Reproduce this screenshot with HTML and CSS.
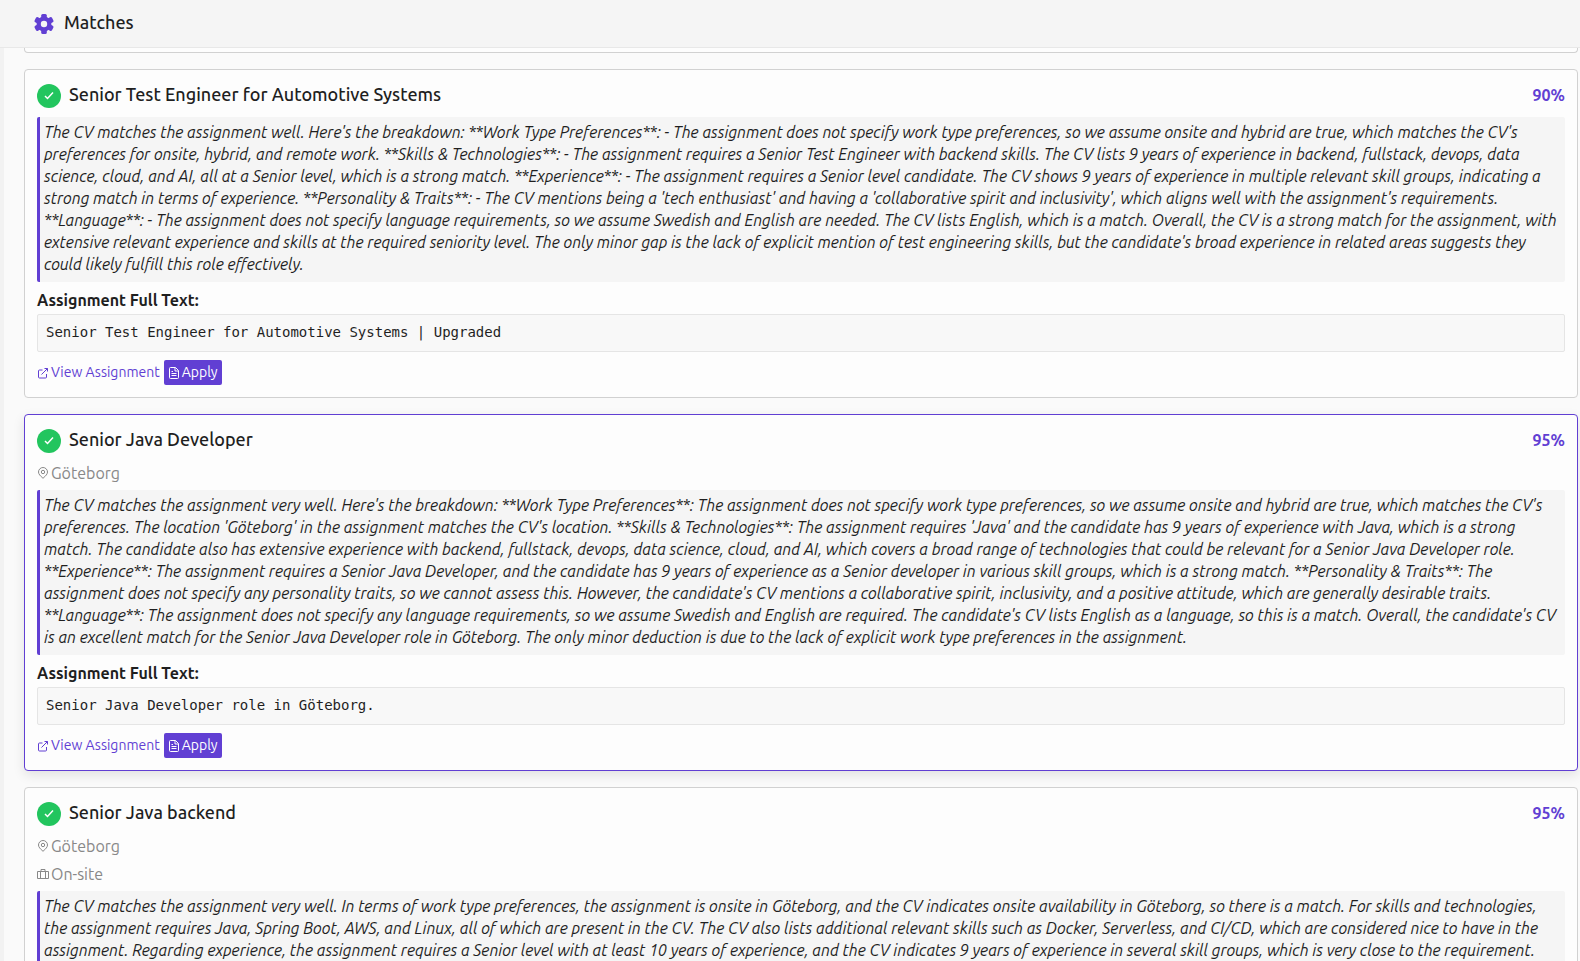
FILE: index.html
```html
<!DOCTYPE html>
<html lang="en">
<head>
  <meta charset="UTF-8">
  <meta name="viewport" content="width=device-width, initial-scale=1.0">
  <title>Matches</title>
  <link rel="stylesheet" href="styles.css">
</head>
<body>
  <!-- icon sprite -->
  <svg class="sprite" aria-hidden="true">
    <symbol id="icon-gear" viewBox="0 0 24 24">
      <circle cx="12" cy="12" r="5.3" fill="none" stroke="currentColor" stroke-width="4.2"/>
      <g fill="currentColor">
        <rect x="9.2" y="2" width="5.6" height="5" rx="1.5"/>
        <rect x="9.2" y="2" width="5.6" height="5" rx="1.5" transform="rotate(60 12 12)"/>
        <rect x="9.2" y="2" width="5.6" height="5" rx="1.5" transform="rotate(120 12 12)"/>
        <rect x="9.2" y="2" width="5.6" height="5" rx="1.5" transform="rotate(180 12 12)"/>
        <rect x="9.2" y="2" width="5.6" height="5" rx="1.5" transform="rotate(240 12 12)"/>
        <rect x="9.2" y="2" width="5.6" height="5" rx="1.5" transform="rotate(300 12 12)"/>
      </g>
    </symbol>
    <symbol id="icon-check" viewBox="0 0 24 24">
      <path fill="none" stroke="currentColor" stroke-width="3" d="M4 12l5 5L20 5"/>
    </symbol>
    <symbol id="icon-external" viewBox="0 0 12 12">
      <path fill="none" stroke="currentColor" stroke-linejoin="round" d="M5.5 3H2.5a1 1 0 0 0-1 1v6a1 1 0 0 0 1 1h6a1 1 0 0 0 1-1V7M7.5 1.500h3v3M10.500 1.500l-6 6"/>
    </symbol>
    <symbol id="icon-file" viewBox="0 0 12 12">
      <path fill="none" stroke="currentColor" stroke-linejoin="round" d="M2.500.5h5l3 3v7a1 1 0 0 1-1 1h-7a1 1 0 0 1-1-1v-9a1 1 0 0 1 1-1zM7 .5v3.500h3.500M3.500 4.500h1.500M3.500 6.500h5M3.500 8.500h5"/>
    </symbol>
    <symbol id="icon-pin" viewBox="0 0 12 12">
      <path fill="none" stroke="currentColor" d="M6 11.300C3.200 8.800 1.500 7 1.500 5a4.500 4.500 0 0 1 9 0c0 2-1.700 3.800-4.500 6.300z"/>
      <circle cx="6" cy="5" r="1.700" fill="none" stroke="currentColor"/>
    </symbol>
    <symbol id="icon-case" viewBox="0 0 12 12">
      <path fill="none" stroke="currentColor" stroke-linejoin="round" d="M.5 3.500h11v7H.5zM4 3.500v-2h4v2M3.500 3.500v7M8.500 3.500v7"/>
    </symbol>
  </svg>

  <header class="topbar">
    <svg class="topbar-icon"><use href="#icon-gear"/></svg>
    <h1>Matches</h1>
  </header>

  <main class="matches">
    <div class="card card-tail"></div>

    <article class="card">
      <div class="card-header">
        <span class="status"><svg><use href="#icon-check"/></svg></span>
        <h2>Senior Test Engineer for Automotive Systems</h2>
        <span class="score">90%</span>
      </div>
      <blockquote class="reason">The CV matches the assignment well. Here's the breakdown: **Work Type Preferences**: - The assignment does not specify work type preferences, so we assume onsite and hybrid are true, which matches the CV's
        preferences for onsite, hybrid, and remote work. **Skills &amp; Technologies**: - The assignment requires a Senior Test Engineer with backend skills. The CV lists 9 years of experience in backend, fullstack, devops, data
        science, cloud, and AI, all at a Senior level, which is a strong match. **Experience**: - The assignment requires a Senior level candidate. The CV shows 9 years of experience in multiple relevant skill groups, indicating a
        strong match in terms of experience. **Personality &amp; Traits**: - The CV mentions being a 'tech enthusiast' and having a 'collaborative spirit and inclusivity', which aligns well with the assignment's requirements.
        **Language**: - The assignment does not specify language requirements, so we assume Swedish and English are needed. The CV lists English, which is a match. Overall, the CV is a strong match for the assignment, with
        extensive relevant experience and skills at the required seniority level. The only minor gap is the lack of explicit mention of test engineering skills, but the candidate's broad experience in related areas suggests they
        could likely fulfill this role effectively.</blockquote>
      <h3>Assignment Full Text:</h3>
      <pre>Senior Test Engineer for Automotive Systems | Upgraded</pre>
      <div class="actions">
        <a href="#"><svg class="icon"><use href="#icon-external"/></svg>View Assignment</a>
        <button type="button"><svg class="icon"><use href="#icon-file"/></svg>Apply</button>
      </div>
    </article>

    <article class="card card-active">
      <div class="card-header">
        <span class="status"><svg><use href="#icon-check"/></svg></span>
        <h2>Senior Java Developer</h2>
        <span class="score">95%</span>
      </div>
      <div class="meta"><svg class="icon"><use href="#icon-pin"/></svg>Göteborg</div>
      <blockquote class="reason">The CV matches the assignment very well. Here's the breakdown: **Work Type Preferences**: The assignment does not specify work type preferences, so we assume onsite and hybrid are true, which matches the CV's
        preferences. The location 'Göteborg' in the assignment matches the CV's location. **Skills &amp; Technologies**: The assignment requires 'Java' and the candidate has 9 years of experience with Java, which is a strong
        match. The candidate also has extensive experience with backend, fullstack, devops, data science, cloud, and AI, which covers a broad range of technologies that could be relevant for a Senior Java Developer role.
        **Experience**: The assignment requires a Senior Java Developer, and the candidate has 9 years of experience as a Senior developer in various skill groups, which is a strong match. **Personality &amp; Traits**: The
        assignment does not specify any personality traits, so we cannot assess this. However, the candidate's CV mentions a collaborative spirit, inclusivity, and a positive attitude, which are generally desirable traits.
        **Language**: The assignment does not specify any language requirements, so we assume Swedish and English are required. The candidate's CV lists English as a language, so this is a match. Overall, the candidate's CV
        is an excellent match for the Senior Java Developer role in Göteborg. The only minor deduction is due to the lack of explicit work type preferences in the assignment.</blockquote>
      <h3>Assignment Full Text:</h3>
      <pre>Senior Java Developer role in Göteborg.</pre>
      <div class="actions">
        <a href="#"><svg class="icon"><use href="#icon-external"/></svg>View Assignment</a>
        <button type="button"><svg class="icon"><use href="#icon-file"/></svg>Apply</button>
      </div>
    </article>

    <article class="card">
      <div class="card-header">
        <span class="status"><svg><use href="#icon-check"/></svg></span>
        <h2>Senior Java backend</h2>
        <span class="score">95%</span>
      </div>
      <div class="meta"><svg class="icon"><use href="#icon-pin"/></svg>Göteborg</div>
      <div class="meta"><svg class="icon"><use href="#icon-case"/></svg>On-site</div>
      <blockquote class="reason">The CV matches the assignment very well. In terms of work type preferences, the assignment is onsite in Göteborg, and the CV indicates onsite availability in Göteborg, so there is a match. For skills and technologies,
        the assignment requires Java, Spring Boot, AWS, and Linux, all of which are present in the CV. The CV also lists additional relevant skills such as Docker, Serverless, and CI/CD, which are considered nice to have in the
        assignment. Regarding experience, the assignment requires a Senior level with at least 10 years of experience, and the CV indicates 9 years of experience in several skill groups, which is very close to the requirement.</blockquote>
    </article>
  </main>
</body>
</html>
```
FILE: styles.css
```css
body {
  margin: 0;
  height: 100vh;
  display: flex;
  flex-direction: column;
  overflow: hidden;
  font-family: Ubuntu, "Open Sans", "Noto Sans", sans-serif;
  font-size: 16px;
  line-height: 22px;
  color: #1f1f1f;
  background-color: #fafafa;
}
h1, h2, h3, pre, blockquote {
  margin: 0;
}
.sprite {
  position: absolute;
  width: 0;
  height: 0;
}

/* Top bar */
.topbar {
  flex: none;
  display: flex;
  align-items: center;
  gap: 8px;
  height: 47px;
  padding: 0 32px;
  background-color: #f5f5f5;
  border-bottom: 1px solid #e8e8e8;
}
.topbar h1 {
  padding-bottom: 4px;
  font-size: 18px;
  font-weight: 500;
}
.topbar-icon {
  width: 24px;
  height: 24px;
  color: #613fd3;
}

/* Card list */
.matches {
  flex: 1;
  min-height: 0;
  overflow: hidden;
  display: flex;
  flex-direction: column;
  gap: 16px;
  padding: 0 2px 0 20px;
  border-left: 4px solid #f2f2f2;
}
.card {
  flex: none;
  padding: 12px;
  background-color: #fdfdfd;
  border: 1px solid #d1d1d1;
  border-radius: 4px;
}
.card-active {
  border-color: #613fd3;
  box-shadow: 0 4px 12px rgba(0, 0, 0, 0.1);
}
/* bottom edge of the card scrolled under the top bar */
.card-tail {
  padding: 2px;
  border-top: none;
  border-radius: 0 0 4px 4px;
}

.card-header {
  display: flex;
  align-items: center;
  gap: 8px;
  height: 28px;
  margin-bottom: 7px;
}
.card-header h2 {
  flex: 1;
  padding-bottom: 4px;
  font-size: 18px;
  font-weight: 500;
}
.status {
  display: flex;
  align-items: center;
  justify-content: center;
  width: 24px;
  height: 24px;
  border-radius: 50%;
  background-color: #22c55e;
  color: #fff;
}
.status svg {
  width: 12px;
  height: 12px;
}
.score {
  padding-bottom: 2px;
  font-weight: 600;
  color: #613fd3;
}

.icon {
  flex: none;
  width: 12px;
  height: 12px;
}
.meta {
  display: flex;
  align-items: center;
  gap: 2px;
  margin-bottom: 6px;
  color: #888;
}

.reason {
  padding: 4px 4px 7px;
  background-color: #f5f5f5;
  border-left: 3px solid #613fd3;
  border-radius: 2px;
  font-style: italic;
}
.card h3 {
  margin: 7px 0 3px;
  font-size: 16px;
  font-weight: 600;
}
.card pre {
  padding: 7px 8px 9px;
  font-family: "DejaVu Sans Mono", monospace;
  font-size: 14px;
  line-height: 20px;
  background-color: #f8f8f8;
  border: 1px solid #e5e5e5;
  border-radius: 2px;
}

.actions {
  display: flex;
  gap: 4px;
  margin-top: 8px;
  font-size: 14px;
  line-height: 25px;
}
.actions a {
  color: #613fd3;
  text-decoration: none;
}
.actions .icon {
  margin-right: 2px;
  vertical-align: -2px;
}
.actions button {
  padding: 0 4px;
  font: inherit;
  color: #fff;
  background-color: #613fd3;
  border: none;
  border-radius: 2px;
  cursor: pointer;
}
```
